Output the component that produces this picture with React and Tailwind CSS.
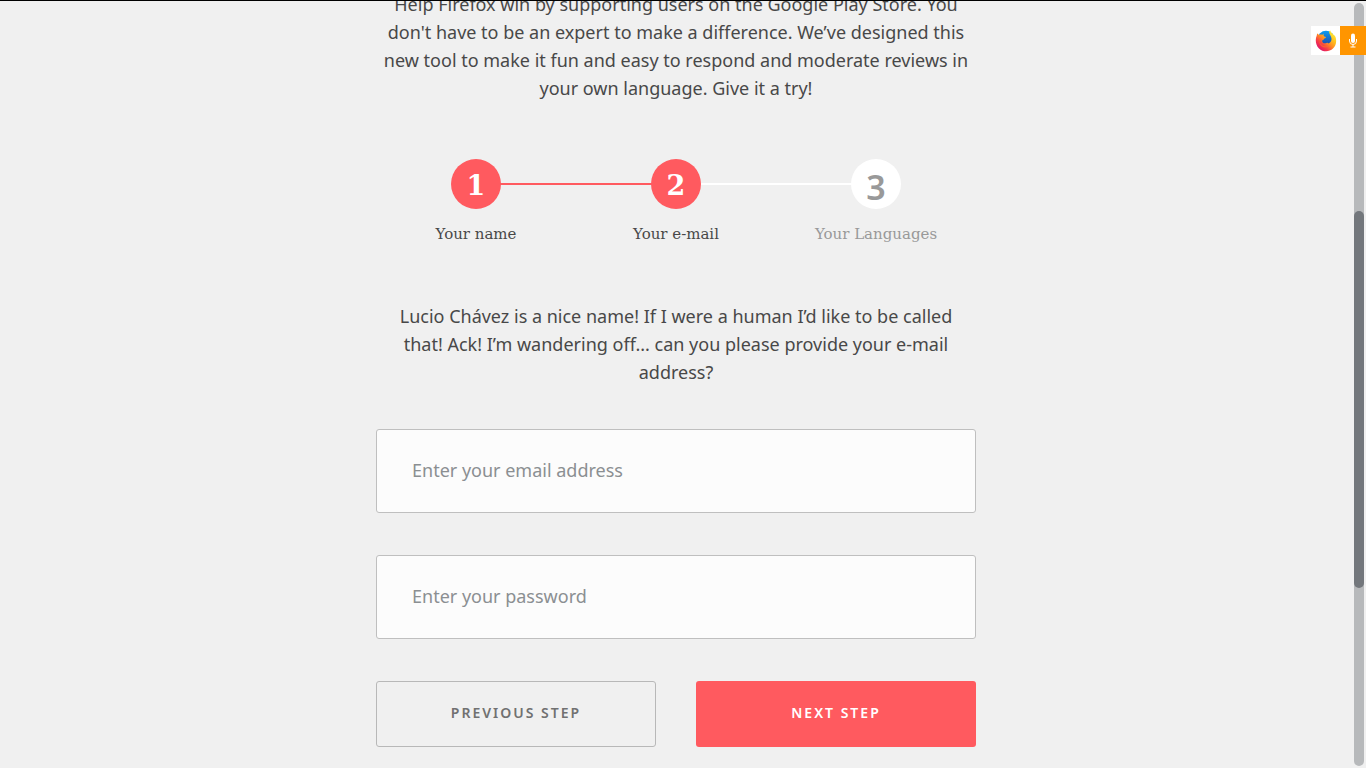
import React from "react";

const steps = [
  { number: "1", label: "Your name", active: true },
  { number: "2", label: "Your e-mail", active: true },
  { number: "3", label: "Your Languages", active: false },
];

function FirefoxLogo() {
  return (
    <svg viewBox="0 0 22 22" className="size-[22px]" aria-hidden="true">
      <defs>
        <linearGradient id="fire" x1="0.9" y1="0.1" x2="0.2" y2="0.9">
          <stop offset="0" stopColor="#fff13a" />
          <stop offset="0.3" stopColor="#ffc21e" />
          <stop offset="0.55" stopColor="#ff8a22" />
          <stop offset="0.8" stopColor="#f5384a" />
          <stop offset="1" stopColor="#e01868" />
        </linearGradient>
        <linearGradient id="globe" x1="0" y1="0" x2="0" y2="1">
          <stop offset="0" stopColor="#0a9cf0" />
          <stop offset="1" stopColor="#233a9c" />
        </linearGradient>
      </defs>
      <circle cx="11" cy="9.2" r="8.4" fill="url(#globe)" />
      <path
        d="M2.2 3.2C3 4.2 3.6 4.6 4.4 4.8C5.4 4.3 6.4 4.3 7.4 4.8L8.8 3.8C8.4 5.2 8.7 6 9.4 6.5L11 7C10.8 8.1 9.6 8.4 8.8 9L8.5 10C7.6 9.9 7 10.6 7.2 11.5C7.8 13.4 9.8 13.7 11.4 12.9C12.4 12.5 13.2 12.8 13.5 13.4C15.4 13 16.6 11 16.5 8.8C16.3 5.8 14 4.4 14.2 2C14.3 1.1 14.8.7 15.4.4C15.5 2.2 17.2 3.2 18.2 4.3C18.7 4.9 19 5.5 19.1 6.1L19.5 5C22.3 9.5 21.4 15.4 18 18.5C14 22.3 7.8 22.1 4 18.4C.4 14.9.1 9 1.7 5.7Z"
        fill="url(#fire)"
      />
      <path d="M4.2 11C5.3 14.8 9 17.4 13.3 16C10 19.2 4.3 16.8 4.2 11Z" fill="#ff7a22" opacity="0.6" />
    </svg>
  );
}

function MicIcon() {
  return (
    <svg viewBox="0 0 10 15" className="h-[15px] w-[10px]" aria-hidden="true">
      <rect x="3" y="0.5" width="4" height="9.5" rx="2" fill="#fff" />
      <path d="M1.5 6V8A3.5 3.5 0 0 0 8.5 8V6M5 11.5V14M2.5 14H7.5" fill="none" stroke="#fff" strokeWidth="1" />
    </svg>
  );
}

function Step({ number, label, active }) {
  return (
    <li className="flex w-[200px] flex-col items-center gap-[11px]">
      <span
        className={
          active
            ? "flex size-[50px] items-center justify-center rounded-full bg-[#ff5a5f] pt-1 font-['DejaVu_Serif',serif] text-[27px] font-bold text-white"
            : "flex size-[50px] items-center justify-center rounded-full bg-white pt-[6px] font-['Noto_Sans',sans-serif] text-[34px] font-semibold text-[#999]"
        }
      >
        {number}
      </span>
      <span
        className={
          active
            ? "font-['DejaVu_Serif',serif] text-[15px] leading-7 text-[#484848]"
            : "font-['DejaVu_Serif',serif] text-[15px] leading-7 text-[#999]"
        }
      >
        {label}
      </span>
    </li>
  );
}

function Field({ type, label }) {
  return (
    <input
      type={type}
      aria-label={label}
      placeholder={label}
      className="h-[84px] w-full rounded-[3px] border border-[#bfbfbf] bg-[#fcfcfc] px-[35px] pb-[2px] text-lg text-[#484848] outline-none placeholder:text-[#8b8f92]"
    />
  );
}

export default function App() {
  return (
    <div className="relative flex h-screen overflow-hidden border-t border-black bg-[#f0f0f0] font-['Noto_Sans',sans-serif] text-[#484848]">
      <main className="min-w-0 flex-1">
        <div className="mx-auto -mt-[11px] w-full max-w-[600px]">
          <p className="text-center text-lg leading-7 whitespace-nowrap">
            Help Firefox win by supporting users on the Google Play Store. You<br />
            don't have to be an expert to make a difference. We’ve designed this<br />
            new tool to make it fun and easy to respond and moderate reviews in<br />
            your own language. Give it a try!
          </p>

          <div className="mt-[57px] grid">
            <div className="col-start-1 row-start-1 mx-[100px] mt-6 flex h-[2px]">
              <div className="flex-1 bg-[#ff5a5f]" />
              <div className="flex-1 bg-white" />
            </div>
            <ol className="relative col-start-1 row-start-1 flex">
              {steps.map((step) => (
                <Step key={step.number} {...step} />
              ))}
            </ol>
          </div>

          <p className="mt-[54px] text-center text-lg leading-7 whitespace-nowrap">
            Lucio Chávez is a nice name! If I were a human I’d like to be called<br />
            that! Ack! I’m wandering off... can you please provide your e-mail<br />
            address?
          </p>

          <form className="mt-[43px] flex flex-col gap-[42px]" onSubmit={(e) => e.preventDefault()}>
            <Field type="email" label="Enter your email address" />
            <Field type="password" label="Enter your password" />
            <div className="grid grid-cols-2 gap-10 text-sm font-semibold tracking-[2px]">
              <button type="button" className="h-[66px] rounded-[3px] border border-[#b8b8b8] pb-[2px] text-[#717171]">
                PREVIOUS STEP
              </button>
              <button type="submit" className="h-[66px] rounded-[3px] bg-[#ff5a5f] pb-[2px] text-white">
                NEXT STEP
              </button>
            </div>
          </form>
        </div>
      </main>

      <div className="flex w-[14px] shrink-0 p-[2px]">
        <div className="w-full rounded-full bg-[#b7b9bb] pt-[208px]">
          <div className="h-[377px] rounded-full bg-[#73777c]" />
        </div>
      </div>

      <div className="absolute top-[25px] right-0 flex h-[29px]">
        <button type="button" aria-label="Firefox" className="flex w-[29px] items-center justify-center bg-white">
          <FirefoxLogo />
        </button>
        <button type="button" aria-label="Voice input" className="flex w-[26px] items-center justify-center bg-[#ff9500]">
          <MicIcon />
        </button>
      </div>
    </div>
  );
}
